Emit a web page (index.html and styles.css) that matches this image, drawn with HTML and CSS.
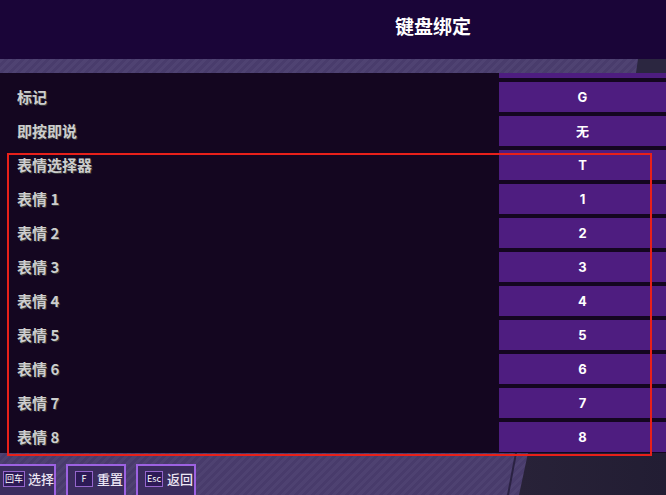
FILE: index.html
```html
<!DOCTYPE html>
<html lang="zh">
<head>
    <meta charset="UTF-8">
    <meta name="viewport" content="width=device-width, initial-scale=1.0">
    <title>键盘绑定</title>
    <link rel="stylesheet" href="styles.css">
</head>
<body>
    <div id="screen">
        <div class="header">
            <h1 class="title">键盘绑定</h1>
        </div>
        <div class="strip"></div>

        <div class="list">
            <div class="row partial">
                <div class="label"></div>
                <div class="key"></div>
            </div>
            <div class="row">
                <div class="label">标记</div>
                <div class="key">G</div>
            </div>
            <div class="row">
                <div class="label">即按即说</div>
                <div class="key">无</div>
            </div>
            <div class="row">
                <div class="label">表情选择器</div>
                <div class="key">T</div>
            </div>
            <div class="row">
                <div class="label">表情 1</div>
                <div class="key">1</div>
            </div>
            <div class="row">
                <div class="label">表情 2</div>
                <div class="key">2</div>
            </div>
            <div class="row">
                <div class="label">表情 3</div>
                <div class="key">3</div>
            </div>
            <div class="row">
                <div class="label">表情 4</div>
                <div class="key">4</div>
            </div>
            <div class="row">
                <div class="label">表情 5</div>
                <div class="key">5</div>
            </div>
            <div class="row">
                <div class="label">表情 6</div>
                <div class="key">6</div>
            </div>
            <div class="row">
                <div class="label">表情 7</div>
                <div class="key">7</div>
            </div>
            <div class="row">
                <div class="label">表情 8</div>
                <div class="key">8</div>
            </div>
        </div>

        <div class="footer">
            <div class="btn first">
                <span class="cap">回车</span>
                <span class="btn-text">选择</span>
            </div>
            <div class="btn">
                <span class="cap">F</span>
                <span class="btn-text">重置</span>
            </div>
            <div class="btn">
                <span class="cap">Esc</span>
                <span class="btn-text">返回</span>
            </div>
        </div>

        <div class="highlight"></div>
    </div>
</body>
</html>
```

FILE: styles.css
```css
html, body {
    margin: 0;
    padding: 0;
    background: #140620;
}

#screen {
    position: relative;
    width: 666px;
    height: 495px;
    overflow: hidden;
    font-family: "Noto Sans CJK SC", "Noto Sans", sans-serif;
}

.header {
    height: 59px;
    background: #1a0538;
    display: flex;
    justify-content: center;
    padding-left: 200px;
    box-sizing: border-box;
}

.title {
    margin: 0;
    padding-top: 12px;
    font-size: 19px;
    line-height: 28px;
    font-weight: 700;
    color: #ffffff;
}

.strip {
    position: relative;
    height: 14px;
    background: #4b3e6f repeating-linear-gradient(135deg, rgba(255,255,255,0.025) 0 3px, rgba(0,0,0,0.03) 3px 6px);
}

.strip::after {
    content: "";
    position: absolute;
    top: 0;
    right: 0;
    width: 30px;
    height: 100%;
    background: #2b2640;
    clip-path: polygon(2px 0, 100% 0, 100% 100%, 0 100%);
}

.list {
    height: 380px;
    background: #140620;
    overflow: hidden;
}

.row {
    display: grid;
    grid-template-columns: 499px 1fr;
    height: 30px;
    margin-bottom: 4px;
}

.row.partial {
    height: 5px;
}

.label {
    padding-left: 17px;
    font-size: 15px;
    line-height: 30px;
    font-weight: 700;
    color: #cdcdcd;
    text-shadow: 1px 1px 0 #3a3a3a;
}

.key {
    background: #4e1d80;
    color: #ffffff;
    text-align: center;
    font-family: "Inter", "Noto Sans CJK SC", sans-serif;
    font-size: 13px;
    font-weight: 700;
    line-height: 30px;
}

.highlight {
    position: absolute;
    left: 7px;
    top: 153px;
    width: 641px;
    height: 299px;
    border: 2px solid #e8201a;
}

.footer {
    position: relative;
    height: 42px;
    background: #4a3d6e repeating-linear-gradient(135deg, rgba(255,255,255,0.025) 0 3px, rgba(0,0,0,0.03) 3px 6px);
    display: flex;
    gap: 10px;
    padding-top: 11px;
    box-sizing: border-box;
}

.footer::before {
    content: "";
    position: absolute;
    top: 0;
    left: 507px;
    width: 10px;
    height: 100%;
    background: #2a2242;
    clip-path: polygon(8px 0, 10px 0, 2px 100%, 0 100%);
}

.footer::after {
    content: "";
    position: absolute;
    top: 0;
    left: 519px;
    right: 0;
    height: 100%;
    background: linear-gradient(90deg, #282238, #221d33);
    clip-path: polygon(9px 0, 100% 0, 100% 100%, 0 100%);
}

.btn {
    flex-shrink: 0;
    width: 60px;
    height: 36px;
    border: 2px solid #9d62e2;
    background: #3b2c5e;
    box-sizing: border-box;
    display: flex;
    align-items: flex-start;
    padding: 5px 0 0 7px;
    gap: 4px;
    white-space: nowrap;
}

.btn.first {
    margin-left: -4px;
    padding-left: 5px;
    gap: 3px;
}

.cap {
    flex-shrink: 0;
    min-width: 14px;
    height: 14px;
    padding: 0 1px;
    border: 1px solid #9466cc;
    background: #2d1a56;
    color: #ffffff;
    font-size: 9px;
    line-height: 14px;
    text-align: center;
    font-family: "Noto Sans CJK SC", "Liberation Sans", sans-serif;
}

.btn-text {
    color: #ece6f4;
    font-size: 13px;
    line-height: 16px;
    font-weight: 500;
}
```
